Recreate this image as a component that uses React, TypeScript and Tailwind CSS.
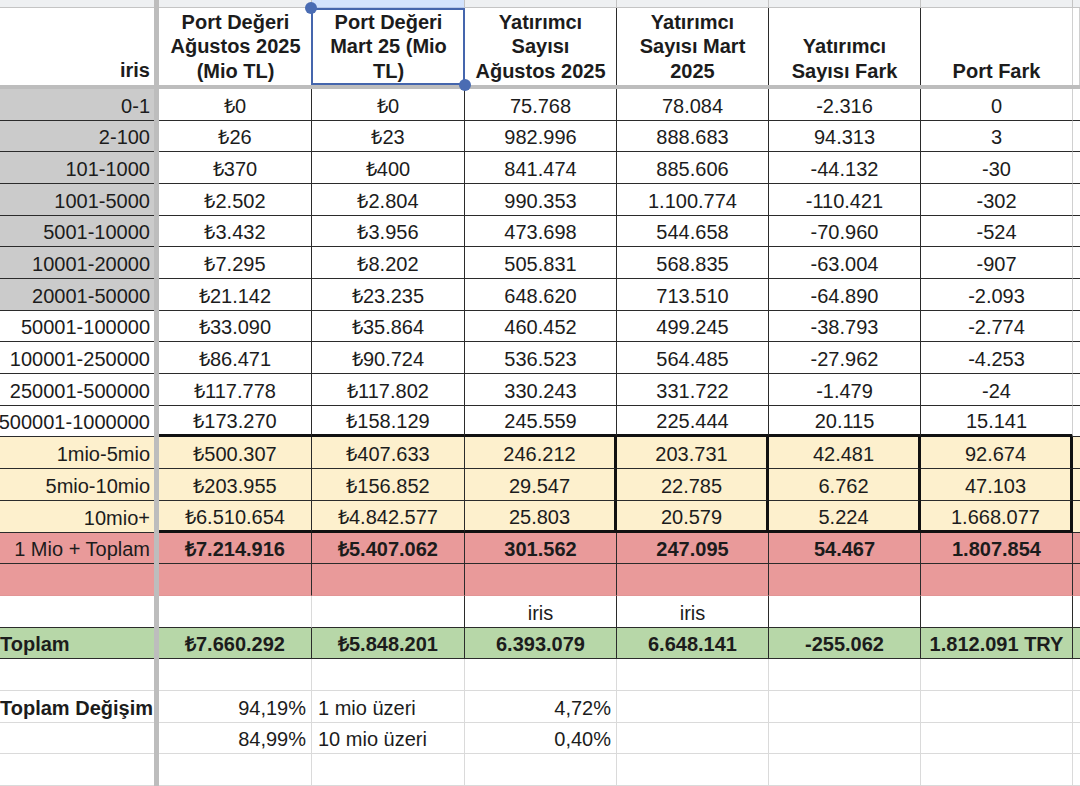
type Kind =
  | "gray"
  | "white"
  | "whiteEnd"
  | "yellow"
  | "yellowEnd"
  | "redBold"
  | "redEnd"
  | "iris"
  | "green"
  | "plain";

type Cell = string | { t: string; a: "l" | "r" | "c" };

const heights = [
  "h-[32px]", "h-[31px]", "h-[32px]", "h-[32px]", "h-[31px]", "h-[32px]", "h-[32px]", "h-[31px]",
  "h-[32px]", "h-[32px]", "h-[31px]", "h-[32px]", "h-[32px]", "h-[32px]", "h-[31px]", "h-[32px]",
  "h-[32px]", "h-[31px]", "h-[32px]", "h-[32px]", "h-[31px]", "h-[32px]",
];

const colW = ["w-[153px]", "w-[153px]", "w-[152px]", "w-[152px]", "w-[152px]", "w-[152px]"];

const rows: { kind: Kind; label: string; cells: Cell[] }[] = [
  { kind: "gray", label: "0-1", cells: ["₺0", "₺0", "75.768", "78.084", "-2.316", "0"] },
  { kind: "gray", label: "2-100", cells: ["₺26", "₺23", "982.996", "888.683", "94.313", "3"] },
  { kind: "gray", label: "101-1000", cells: ["₺370", "₺400", "841.474", "885.606", "-44.132", "-30"] },
  { kind: "gray", label: "1001-5000", cells: ["₺2.502", "₺2.804", "990.353", "1.100.774", "-110.421", "-302"] },
  { kind: "gray", label: "5001-10000", cells: ["₺3.432", "₺3.956", "473.698", "544.658", "-70.960", "-524"] },
  { kind: "gray", label: "10001-20000", cells: ["₺7.295", "₺8.202", "505.831", "568.835", "-63.004", "-907"] },
  { kind: "gray", label: "20001-50000", cells: ["₺21.142", "₺23.235", "648.620", "713.510", "-64.890", "-2.093"] },
  { kind: "white", label: "50001-100000", cells: ["₺33.090", "₺35.864", "460.452", "499.245", "-38.793", "-2.774"] },
  { kind: "white", label: "100001-250000", cells: ["₺86.471", "₺90.724", "536.523", "564.485", "-27.962", "-4.253"] },
  { kind: "white", label: "250001-500000", cells: ["₺117.778", "₺117.802", "330.243", "331.722", "-1.479", "-24"] },
  { kind: "whiteEnd", label: "500001-1000000", cells: ["₺173.270", "₺158.129", "245.559", "225.444", "20.115", "15.141"] },
  { kind: "yellow", label: "1mio-5mio", cells: ["₺500.307", "₺407.633", "246.212", "203.731", "42.481", "92.674"] },
  { kind: "yellow", label: "5mio-10mio", cells: ["₺203.955", "₺156.852", "29.547", "22.785", "6.762", "47.103"] },
  { kind: "yellowEnd", label: "10mio+", cells: ["₺6.510.654", "₺4.842.577", "25.803", "20.579", "5.224", "1.668.077"] },
  { kind: "redBold", label: "1 Mio + Toplam", cells: ["₺7.214.916", "₺5.407.062", "301.562", "247.095", "54.467", "1.807.854"] },
  { kind: "redEnd", label: "", cells: ["", "", "", "", "", ""] },
  { kind: "iris", label: "", cells: ["", "", "iris", "iris", "", ""] },
  { kind: "green", label: "Toplam", cells: ["₺7.660.292", "₺5.848.201", "6.393.079", "6.648.141", "-255.062", "1.812.091 TRY"] },
  { kind: "plain", label: "", cells: ["", "", "", "", "", ""] },
  {
    kind: "plain",
    label: "Toplam Değişim",
    cells: [{ t: "94,19%", a: "r" }, { t: "1 mio üzeri", a: "l" }, { t: "4,72%", a: "r" }, "", "", ""],
  },
  {
    kind: "plain",
    label: "",
    cells: [{ t: "84,99%", a: "r" }, { t: "10 mio üzeri", a: "l" }, { t: "0,40%", a: "r" }, "", "", ""],
  },
  { kind: "plain", label: "", cells: ["", "", "", "", "", ""] },
];

const heads = [
  ["Port Değeri", "Ağustos 2025", "(Mio TL)"],
  ["Port Değeri", "Mart 25 (Mio", "TL)"],
  ["Yatırımcı", "Sayısı", "Ağustos 2025"],
  ["Yatırımcı", "Sayısı Mart", "2025"],
  ["Yatırımcı", "Sayısı Fark"],
  ["Port Fark"],
];

function rowBg(kind: Kind) {
  if (kind === "yellow" || kind === "yellowEnd") return "bg-[#fdf0cd]";
  if (kind === "redBold" || kind === "redEnd") return "bg-[#e99a9a]";
  if (kind === "green") return "bg-[#b7d7a8]";
  return "bg-white";
}

function thinBottom(kind: Kind) {
  if (kind === "plain") return "border-b border-b-[#dadada]";
  if (kind === "redEnd") return "border-b border-b-[#e29595]";
  return "border-b border-b-[#2b2b2b]";
}

function dataCls(kind: Kind, j: number) {
  let r = "border-r border-r-[#2b2b2b]";
  if (kind === "plain") r = "border-r border-r-[#dadada]";
  else if (kind === "yellow" || kind === "yellowEnd")
    r = j >= 2 ? "border-r-[3px] border-r-[#111]" : "border-r border-r-[#2b2b2b]";
  else if (kind === "iris") r = j === 0 ? "border-r border-r-[#dadada]" : "border-r border-r-[#2b2b2b]";
  else if (kind === "gray" || kind === "white" || kind === "whiteEnd")
    r = j === 5 ? "border-r border-r-[#d0d0d0]" : "border-r border-r-[#2b2b2b]";

  const b = kind === "whiteEnd" || kind === "yellowEnd" ? "border-b-[3px] border-b-[#111]" : thinBottom(kind);
  return `${rowBg(kind)} ${r} ${b}`;
}

function labelCls(kind: Kind) {
  const bg = kind === "gray" ? "bg-[#cbcbcb]" : rowBg(kind);
  return `${bg} ${thinBottom(kind)}`;
}

function Separator() {
  return <div className="w-[5px] shrink-0 self-stretch bg-[#bdbdbd]" />;
}

function DataRow({ kind, label, cells, h }: { kind: Kind; label: string; cells: Cell[]; h: string }) {
  const bold = kind === "redBold" || kind === "green";
  const labelLeft = kind === "green" || label === "Toplam Değişim";
  return (
    <div className={`flex ${h}`}>
      <div
        className={`w-[154px] shrink-0 flex items-center pt-[2px] overflow-hidden whitespace-nowrap ${labelCls(kind)} ${
          labelLeft ? "justify-start pl-0 font-bold" : "justify-end pr-[4px]"
        }`}
      >
        {label}
      </div>
      <Separator />
      {cells.map((c, j) => {
        const t = typeof c === "string" ? c : c.t;
        const a = typeof c === "string" ? "c" : c.a;
        const align =
          a === "r" ? "justify-end pr-[5px]" : a === "l" ? "justify-start pl-[6px]" : "justify-center";
        return (
          <div
            key={j}
            className={`${colW[j]} shrink-0 flex items-center pt-[2px] whitespace-nowrap overflow-hidden ${align} ${
              bold ? "font-bold" : ""
            } ${dataCls(kind, j)}`}
          >
            {t}
          </div>
        );
      })}
      <div className={`flex-1 ${rowBg(kind)} ${thinBottom(kind)}`} />
    </div>
  );
}

function HeaderStrip() {
  return (
    <div className="flex h-[8px]">
      <div className="w-[154px] shrink-0 bg-[#eef0f2] border-b border-b-[#c4c4c4]" />
      <Separator />
      {colW.map((w, j) => (
        <div
          key={j}
          className={`${w} shrink-0 border-b ${
            j === 1
              ? "bg-[#d3e3fd] border-b-[#b8c8e8] border-r border-r-[#c4c4c4]"
              : "bg-[#eef0f2] border-b-[#c4c4c4] border-r border-r-[#c4c4c4]"
          }`}
        />
      ))}
      <div className="flex-1 bg-[#eef0f2] border-b border-b-[#c4c4c4]" />
    </div>
  );
}

function HeaderRow() {
  return (
    <div className="flex h-[77px]">
      <div className="w-[154px] shrink-0 flex items-end justify-end pr-[4px] pb-[3px] font-bold leading-[24px]">
        iris
      </div>
      <Separator />
      {heads.map((lines, j) => {
        const r =
          j === 0 || j === 1
            ? ""
            : j === 5
            ? "border-r border-r-[#d0d0d0]"
            : "border-r border-r-[#2b2b2b]";
        return (
          <div
            key={j}
            className={`${colW[j]} shrink-0 relative flex flex-col items-center justify-end pb-[2px] font-bold text-[20px] leading-[24.5px] ${r}`}
          >
            {lines.map((l) => (
              <span key={l} className="whitespace-nowrap">
                {l}
              </span>
            ))}
            {j === 1 && (
              <>
                <div className="absolute inset-0 -left-[1px] border-2 border-[#4566ad]" />
                <div className="absolute -top-[6px] -left-[7px] size-[12px] rounded-full bg-[#4a6cb3] z-10" />
                <div className="absolute -bottom-[6px] -right-[6px] size-[12px] rounded-full bg-[#4a6cb3] z-10" />
              </>
            )}
          </div>
        );
      })}
      <div className="flex-1 border-r border-r-[#d0d0d0]" />
    </div>
  );
}

export default function App() {
  return (
    <div className="w-[1080px] h-[786px] overflow-hidden bg-white text-[#1c1c1c] text-[20px] font-['Liberation_Sans',Arial,sans-serif]">
      <HeaderStrip />
      <HeaderRow />
      <div className="h-[4px] bg-[#bdbdbd]" />
      {rows.map((r, i) => (
        <DataRow key={i} kind={r.kind} label={r.label} cells={r.cells} h={heights[i]} />
      ))}
    </div>
  );
}
